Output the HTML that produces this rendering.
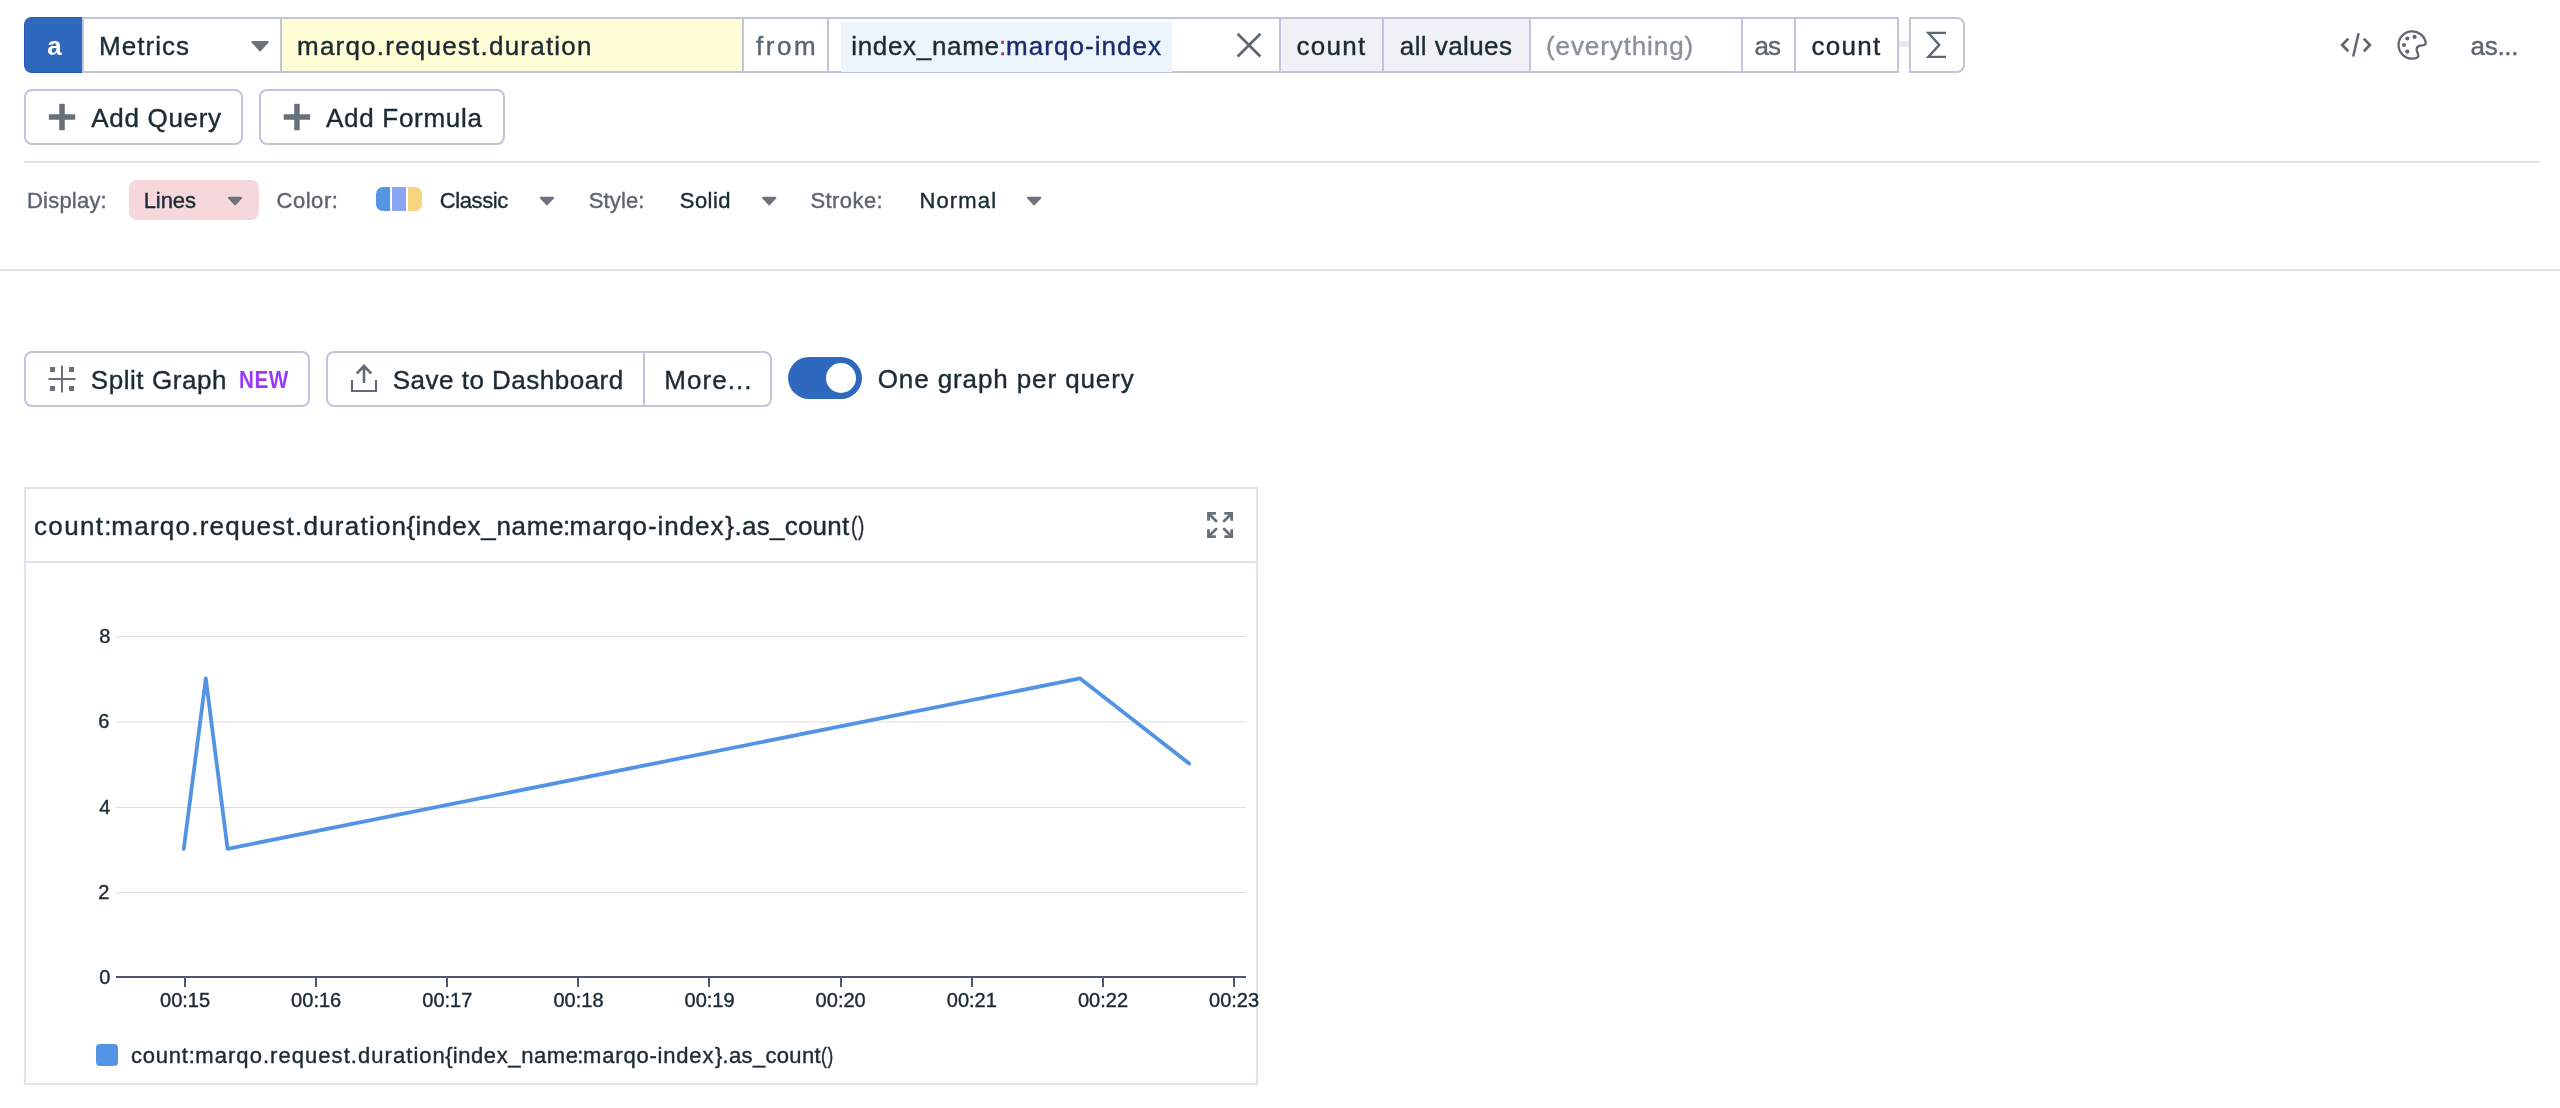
<!DOCTYPE html>
<html><head><meta charset="utf-8"><title>Metrics Explorer</title>
<style>
html,body{margin:0;padding:0;background:#fff;}
body{width:2560px;height:1108px;position:relative;overflow:hidden;font-family:"Liberation Sans", sans-serif;}
.b{position:absolute;}
#txt{position:absolute;left:0;top:0;width:2560px;height:1108px;will-change:transform;}
.t{position:absolute;white-space:pre;line-height:1;font-family:"Liberation Sans", sans-serif;-webkit-text-stroke:0.4px;}
svg{position:absolute;left:0;top:0;}
</style></head><body>
<div class="b" style="left:24px;top:17px;width:58px;height:56px;background:#2e69be;border-radius:8px 0 0 8px;border:1px solid #2458b6;border-right:none;box-sizing:border-box;"></div>
<div class="b" style="left:82px;top:17px;width:1817px;height:56px;background:#fff;border:2px solid #c0c5dc;box-sizing:border-box;"></div>
<div class="b" style="left:282px;top:19px;width:460px;height:52px;background:#fffdd5;"></div>
<div class="b" style="left:841px;top:22px;width:331px;height:50px;background:#edf5fc;"></div>
<div class="b" style="left:1281px;top:19px;width:248px;height:52px;background:#f0f1f6;"></div>
<div class="b" style="left:280px;top:19px;width:2px;height:52px;background:#c0c5dc;"></div>
<div class="b" style="left:742px;top:19px;width:2px;height:52px;background:#c0c5dc;"></div>
<div class="b" style="left:827px;top:19px;width:2px;height:52px;background:#c0c5dc;"></div>
<div class="b" style="left:1279px;top:19px;width:2px;height:52px;background:#c0c5dc;"></div>
<div class="b" style="left:1382px;top:19px;width:2px;height:52px;background:#c0c5dc;"></div>
<div class="b" style="left:1529px;top:19px;width:2px;height:52px;background:#c0c5dc;"></div>
<div class="b" style="left:1741px;top:19px;width:2px;height:52px;background:#c0c5dc;"></div>
<div class="b" style="left:1794px;top:19px;width:2px;height:52px;background:#c0c5dc;"></div>
<div class="b" style="left:1899px;top:41px;width:10px;height:6px;background:#e4e7f0;"></div>
<div class="b" style="left:1909px;top:17px;width:56px;height:56px;background:#fff;border:2px solid #c0c5dc;box-sizing:border-box;border-radius:0 8px 8px 0;"></div>
<div class="b" style="left:24px;top:89px;width:219px;height:56px;background:#fff;border:2px solid #c0c5dc;box-sizing:border-box;border-radius:8px;"></div>
<div class="b" style="left:259px;top:89px;width:246px;height:56px;background:#fff;border:2px solid #c0c5dc;box-sizing:border-box;border-radius:8px;"></div>
<div class="b" style="left:24px;top:161px;width:2516px;height:2px;background:#e1e4ed;"></div>
<div class="b" style="left:0px;top:269px;width:2560px;height:2px;background:#e1e4ed;"></div>
<div class="b" style="left:129px;top:180px;width:130px;height:40px;background:#f5d7dc;border-radius:8px;"></div>
<div class="b" style="left:376px;top:187px;width:14px;height:24px;background:#5496e2;border-radius:7px 0 0 7px;"></div>
<div class="b" style="left:392px;top:187px;width:14px;height:24px;background:#8aa7f5;"></div>
<div class="b" style="left:408px;top:187px;width:14px;height:24px;background:#f7d580;border-radius:0 7px 7px 0;"></div>
<div class="b" style="left:24px;top:351px;width:286px;height:56px;background:#fff;border:2px solid #c0c5dc;box-sizing:border-box;border-radius:8px;"></div>
<div class="b" style="left:326px;top:351px;width:446px;height:56px;background:#fff;border:2px solid #c0c5dc;box-sizing:border-box;border-radius:8px;"></div>
<div class="b" style="left:643px;top:353px;width:2px;height:52px;background:#c0c5dc;"></div>
<div class="b" style="left:788px;top:357px;width:74px;height:42px;background:#2e69be;border-radius:21px;"></div>
<div class="b" style="left:826px;top:363px;width:30px;height:30px;background:#fff;border-radius:15px;"></div>
<div class="b" style="left:24px;top:487px;width:1234px;height:598px;background:#fff;border:2px solid #e0e3ec;box-sizing:border-box;"></div>
<div class="b" style="left:26px;top:561px;width:1230px;height:2px;background:#e0e3ec;"></div>
<div class="b" style="left:96px;top:1044px;width:22px;height:22px;background:#5394e4;border-radius:4px;"></div>
<svg width="2560" height="1108" viewBox="0 0 2560 1108">
<path d="M252.5 42.0 L267.7 42.0 L260.1 50.4 Z" fill="#6e737c" stroke="#6e737c" stroke-width="2" stroke-linejoin="round"/>
<path d="M228.89999999999998 197.70000000000002 L241.2 197.70000000000002 L235.04999999999998 204.4 Z" fill="#6e737c" stroke="#6e737c" stroke-width="2" stroke-linejoin="round"/>
<path d="M540.8000000000001 197.70000000000002 L553.1 197.70000000000002 L546.95 204.4 Z" fill="#6e737c" stroke="#6e737c" stroke-width="2" stroke-linejoin="round"/>
<path d="M763.1 197.70000000000002 L775.4 197.70000000000002 L769.25 204.4 Z" fill="#6e737c" stroke="#6e737c" stroke-width="2" stroke-linejoin="round"/>
<path d="M1028.0 197.70000000000002 L1040.3 197.70000000000002 L1034.15 204.4 Z" fill="#6e737c" stroke="#6e737c" stroke-width="2" stroke-linejoin="round"/>
<rect x="59.25" y="103.8" width="5.5" height="26.4" fill="#68717a"/><rect x="48.8" y="114.25" width="26.4" height="5.5" fill="#68717a"/>
<rect x="294.2" y="103.8" width="5.5" height="26.4" fill="#68717a"/><rect x="283.75" y="114.25" width="26.4" height="5.5" fill="#68717a"/>
<path d="M1237.6 33.7 L1260.4 56.5 M1260.4 33.7 L1237.6 56.5" stroke="#5f6870" stroke-width="2.7" fill="none"/>
<path d="M1946 32.9 L1928.3 32.9 L1939.3 44.9 L1928.3 56.9 L1946 56.9" stroke="#5f6870" stroke-width="2.3" fill="none" stroke-linejoin="miter"/>
<path d="M2348.3 38.6 L2342.1 44.95 L2348.3 51.3 M2363.8 38.6 L2369.9 44.95 L2363.8 51.3" stroke="#5f6870" stroke-width="2.7" fill="none" stroke-linejoin="miter"/><path d="M2358.6 33.2 L2353.2 56.5" stroke="#5f6870" stroke-width="2.5" fill="none"/>
<path d="M2425.8 43 A13.7 13.7 0 1 0 2412.1 58.7 C2416 58.7 2418.8 57.5 2418.2 55 C2417.8 52.5 2416.3 51 2416.6 48.9 C2416.9 46.8 2418.5 45.7 2420.6 45.6 C2423 45.5 2425.7 45.4 2425.8 43 Z" stroke="#5f6870" stroke-width="2.3" fill="none" stroke-linejoin="round"/>
<circle cx="2407.3" cy="38.5" r="2.1" fill="#5f6870"/>
<circle cx="2414.6" cy="36.9" r="2.1" fill="#5f6870"/>
<circle cx="2404" cy="45" r="2.1" fill="#5f6870"/>
<circle cx="2407.3" cy="51.6" r="2.1" fill="#5f6870"/>
<rect x="61" y="365.5" width="2" height="27" fill="#68717a"/><rect x="48.5" y="378" width="27" height="2" fill="#68717a"/>
<rect x="50" y="367" width="5" height="5" fill="#68717a"/>
<rect x="69" y="367" width="5" height="5" fill="#68717a"/>
<rect x="50" y="386" width="5" height="5" fill="#68717a"/>
<rect x="69" y="386" width="5" height="5" fill="#68717a"/>
<path d="M352 380 L352 391 L376 391 L376 380" stroke="#636c75" stroke-width="2.2" fill="none"/>
<path d="M364 383 L364 365.5 M356.7 373.6 L364 366 L371.3 373.6" stroke="#636c75" stroke-width="2.6" fill="none"/>
<path d="M1215.90 513.4 L1208.5 513.4 L1208.5 520.80" stroke="#68717a" stroke-width="2.8" fill="none"/><path d="M1208.5 513.4 L1216.10 521.00" stroke="#68717a" stroke-width="2.8" fill="none" stroke-linecap="round"/>
<path d="M1224.30 513.4 L1231.7 513.4 L1231.7 520.80" stroke="#68717a" stroke-width="2.8" fill="none"/><path d="M1231.7 513.4 L1224.10 521.00" stroke="#68717a" stroke-width="2.8" fill="none" stroke-linecap="round"/>
<path d="M1215.90 536.6 L1208.5 536.6 L1208.5 529.20" stroke="#68717a" stroke-width="2.8" fill="none"/><path d="M1208.5 536.6 L1216.10 529.00" stroke="#68717a" stroke-width="2.8" fill="none" stroke-linecap="round"/>
<path d="M1224.30 536.6 L1231.7 536.6 L1231.7 529.20" stroke="#68717a" stroke-width="2.8" fill="none"/><path d="M1231.7 536.6 L1224.10 529.00" stroke="#68717a" stroke-width="2.8" fill="none" stroke-linecap="round"/>
<rect x="116" y="636" width="1130" height="1" fill="#dcdde0"/>
<rect x="116" y="721.5" width="1130" height="1" fill="#dcdde0"/>
<rect x="116" y="807" width="1130" height="1" fill="#dcdde0"/>
<rect x="116" y="892" width="1130" height="1" fill="#dcdde0"/>
<rect x="116" y="976" width="1130" height="2" fill="#50566f"/>
<rect x="184" y="978" width="2" height="9" fill="#50566f"/>
<rect x="315" y="978" width="2" height="9" fill="#50566f"/>
<rect x="446" y="978" width="2" height="9" fill="#50566f"/>
<rect x="577" y="978" width="2" height="9" fill="#50566f"/>
<rect x="708" y="978" width="2" height="9" fill="#50566f"/>
<rect x="840" y="978" width="2" height="9" fill="#50566f"/>
<rect x="971" y="978" width="2" height="9" fill="#50566f"/>
<rect x="1102" y="978" width="2" height="9" fill="#50566f"/>
<rect x="1233" y="978" width="2" height="9" fill="#50566f"/>
<polyline points="183.8,848.8 205.8,678.4 227.6,848.8 1080.1,678.4 1189.2,763.6" fill="none" stroke="#5294e3" stroke-width="3.8" stroke-linejoin="round" stroke-linecap="round"/>
</svg>
<div id="txt">
<span class="t" style="left:47.30px;top:32.99px;font-size:26px;color:#ffffff;font-weight:700;-webkit-text-stroke:0;">a</span>
<span class="t" style="left:99.00px;top:32.99px;font-size:26px;color:#1c2b34;letter-spacing:1.037px;">Metrics</span>
<span class="t" style="left:297.00px;top:32.99px;font-size:26px;color:#1c2b34;letter-spacing:1.221px;">marqo.request.duration</span>
<span class="t" style="left:756.00px;top:32.99px;font-size:26px;color:#5c6670;letter-spacing:2.553px;">from</span>
<span class="t" style="left:851.20px;top:32.99px;font-size:26px;color:#1c2b34;letter-spacing:0.690px;">index_name</span>
<span class="t" style="left:998.90px;top:32.99px;font-size:26px;color:#c01fa0;">:</span>
<span class="t" style="left:1006.00px;top:32.99px;font-size:26px;color:#1b2c6e;letter-spacing:1.049px;">marqo-index</span>
<span class="t" style="left:1296.50px;top:32.99px;font-size:26px;color:#1c2b34;letter-spacing:1.280px;">count</span>
<span class="t" style="left:1399.75px;top:32.99px;font-size:26px;color:#1c2b34;letter-spacing:0.429px;">all values</span>
<span class="t" style="left:1546.00px;top:32.99px;font-size:26px;color:#8a9299;letter-spacing:0.899px;">(everything)</span>
<span class="t" style="left:1754.50px;top:32.99px;font-size:26px;color:#5c6670;letter-spacing:-0.960px;">as</span>
<span class="t" style="left:1811.50px;top:32.99px;font-size:26px;color:#1c2b34;letter-spacing:1.280px;">count</span>
<span class="t" style="left:2470.60px;top:32.99px;font-size:26px;color:#5c6670;letter-spacing:-0.302px;">as...</span>
<span class="t" style="left:91.30px;top:104.99px;font-size:26px;color:#1c2b34;letter-spacing:0.677px;">Add Query</span>
<span class="t" style="left:326.00px;top:104.99px;font-size:26px;color:#1c2b34;letter-spacing:0.712px;">Add Formula</span>
<span class="t" style="left:27.00px;top:190.08px;font-size:22px;color:#5c6670;letter-spacing:0.209px;">Display:</span>
<span class="t" style="left:143.70px;top:190.08px;font-size:22px;color:#1c2b34;letter-spacing:-0.073px;">Lines</span>
<span class="t" style="left:276.50px;top:190.08px;font-size:22px;color:#5c6670;letter-spacing:0.536px;">Color:</span>
<span class="t" style="left:439.80px;top:190.08px;font-size:22px;color:#1c2b34;letter-spacing:-0.400px;">Classic</span>
<span class="t" style="left:588.80px;top:190.08px;font-size:22px;color:#5c6670;letter-spacing:0.118px;">Style:</span>
<span class="t" style="left:679.80px;top:190.08px;font-size:22px;color:#1c2b34;letter-spacing:0.429px;">Solid</span>
<span class="t" style="left:810.40px;top:190.08px;font-size:22px;color:#5c6670;letter-spacing:0.436px;">Stroke:</span>
<span class="t" style="left:919.40px;top:190.08px;font-size:22px;color:#1c2b34;letter-spacing:1.158px;">Normal</span>
<span class="t" style="left:90.75px;top:366.99px;font-size:26px;color:#1c2b34;letter-spacing:0.565px;">Split Graph</span>
<span class="t" style="left:238.71px;top:368.88px;font-size:23.3px;color:#9a3af5;letter-spacing:0.6px;transform:scaleX(0.8870);transform-origin:0 0;font-weight:700;-webkit-text-stroke:0;">NEW</span>
<span class="t" style="left:392.75px;top:366.99px;font-size:26px;color:#1c2b34;letter-spacing:0.492px;">Save to Dashboard</span>
<span class="t" style="left:664.25px;top:366.99px;font-size:26px;color:#1c2b34;letter-spacing:1.053px;">More...</span>
<span class="t" style="left:877.75px;top:366.49px;font-size:26px;color:#1c2b34;letter-spacing:0.893px;">One graph per query</span>
<span class="t" style="left:34.00px;top:512.99px;font-size:26px;color:#1c2b34;letter-spacing:1.339px;">count:</span>
<span class="t" style="left:130.90px;top:1045.28px;font-size:22px;color:#1c2b34;letter-spacing:0.810px;">count:</span>
<span class="t" style="left:111.30px;top:512.99px;font-size:26px;color:#1c2b34;letter-spacing:1.235px;">marqo.request.duration</span>
<span class="t" style="left:195.31px;top:1045.28px;font-size:22px;color:#1c2b34;letter-spacing:1.052px;">marqo.request.duration</span>
<span class="t" style="left:406.50px;top:512.99px;font-size:26px;color:#1c2b34;">{</span>
<span class="t" style="left:445.25px;top:1045.28px;font-size:22px;color:#1c2b34;">{</span>
<span class="t" style="left:415.50px;top:512.99px;font-size:26px;color:#1c2b34;letter-spacing:0.712px;">index_name</span>
<span class="t" style="left:452.71px;top:1045.28px;font-size:22px;color:#1c2b34;letter-spacing:0.602px;">index_name</span>
<span class="t" style="left:563.00px;top:512.99px;font-size:26px;color:#1c2b34;">:</span>
<span class="t" style="left:577.36px;top:1045.28px;font-size:22px;color:#1c2b34;">:</span>
<span class="t" style="left:569.60px;top:512.99px;font-size:26px;color:#1c2b34;letter-spacing:0.929px;">marqo-index</span>
<span class="t" style="left:583.10px;top:1045.28px;font-size:22px;color:#1c2b34;letter-spacing:0.801px;">marqo-index</span>
<span class="t" style="left:725.30px;top:512.99px;font-size:26px;color:#1c2b34;">}</span>
<span class="t" style="left:715.00px;top:1045.28px;font-size:22px;color:#1c2b34;">}</span>
<span class="t" style="left:734.60px;top:512.99px;font-size:26px;color:#1c2b34;letter-spacing:0.235px;">.as_count</span>
<span class="t" style="left:722.56px;top:1045.28px;font-size:22px;color:#1c2b34;letter-spacing:0.333px;">.as_count</span>
<span class="t" style="left:851.17px;top:512.99px;font-size:26px;color:#1c2b34;letter-spacing:1.0px;transform:scaleX(0.7324);transform-origin:0 0;">()</span>
<span class="t" style="left:821.34px;top:1045.28px;font-size:22px;color:#1c2b34;letter-spacing:0.8px;transform:scaleX(0.7864);transform-origin:0 0;">()</span>
<span class="t" style="left:99.20px;top:967.07px;font-size:20px;color:#1c2b34;">0</span>
<span class="t" style="left:98.20px;top:882.07px;font-size:20px;color:#1c2b34;">2</span>
<span class="t" style="left:99.20px;top:797.07px;font-size:20px;color:#1c2b34;">4</span>
<span class="t" style="left:98.20px;top:711.47px;font-size:20px;color:#1c2b34;">6</span>
<span class="t" style="left:99.20px;top:626.07px;font-size:20px;color:#1c2b34;">8</span>
<span class="t" style="left:160.00px;top:990.07px;font-size:20px;color:#1c2b34;letter-spacing:0.019px;">00:15</span>
<span class="t" style="left:291.12px;top:990.07px;font-size:20px;color:#1c2b34;letter-spacing:0.019px;">00:16</span>
<span class="t" style="left:422.25px;top:990.07px;font-size:20px;color:#1c2b34;letter-spacing:0.019px;">00:17</span>
<span class="t" style="left:553.38px;top:990.07px;font-size:20px;color:#1c2b34;letter-spacing:0.019px;">00:18</span>
<span class="t" style="left:684.50px;top:990.07px;font-size:20px;color:#1c2b34;letter-spacing:0.019px;">00:19</span>
<span class="t" style="left:815.62px;top:990.07px;font-size:20px;color:#1c2b34;letter-spacing:0.019px;">00:20</span>
<span class="t" style="left:946.75px;top:990.07px;font-size:20px;color:#1c2b34;letter-spacing:0.019px;">00:21</span>
<span class="t" style="left:1077.88px;top:990.07px;font-size:20px;color:#1c2b34;letter-spacing:0.019px;">00:22</span>
<span class="t" style="left:1209.00px;top:990.07px;font-size:20px;color:#1c2b34;letter-spacing:0.019px;">00:23</span>
</div>
<script>(function(){var r=window.innerWidth/2560;if(r>0.1&&Math.abs(r-1)>0.01){document.body.style.zoom=r;}})();</script>
</body></html>
